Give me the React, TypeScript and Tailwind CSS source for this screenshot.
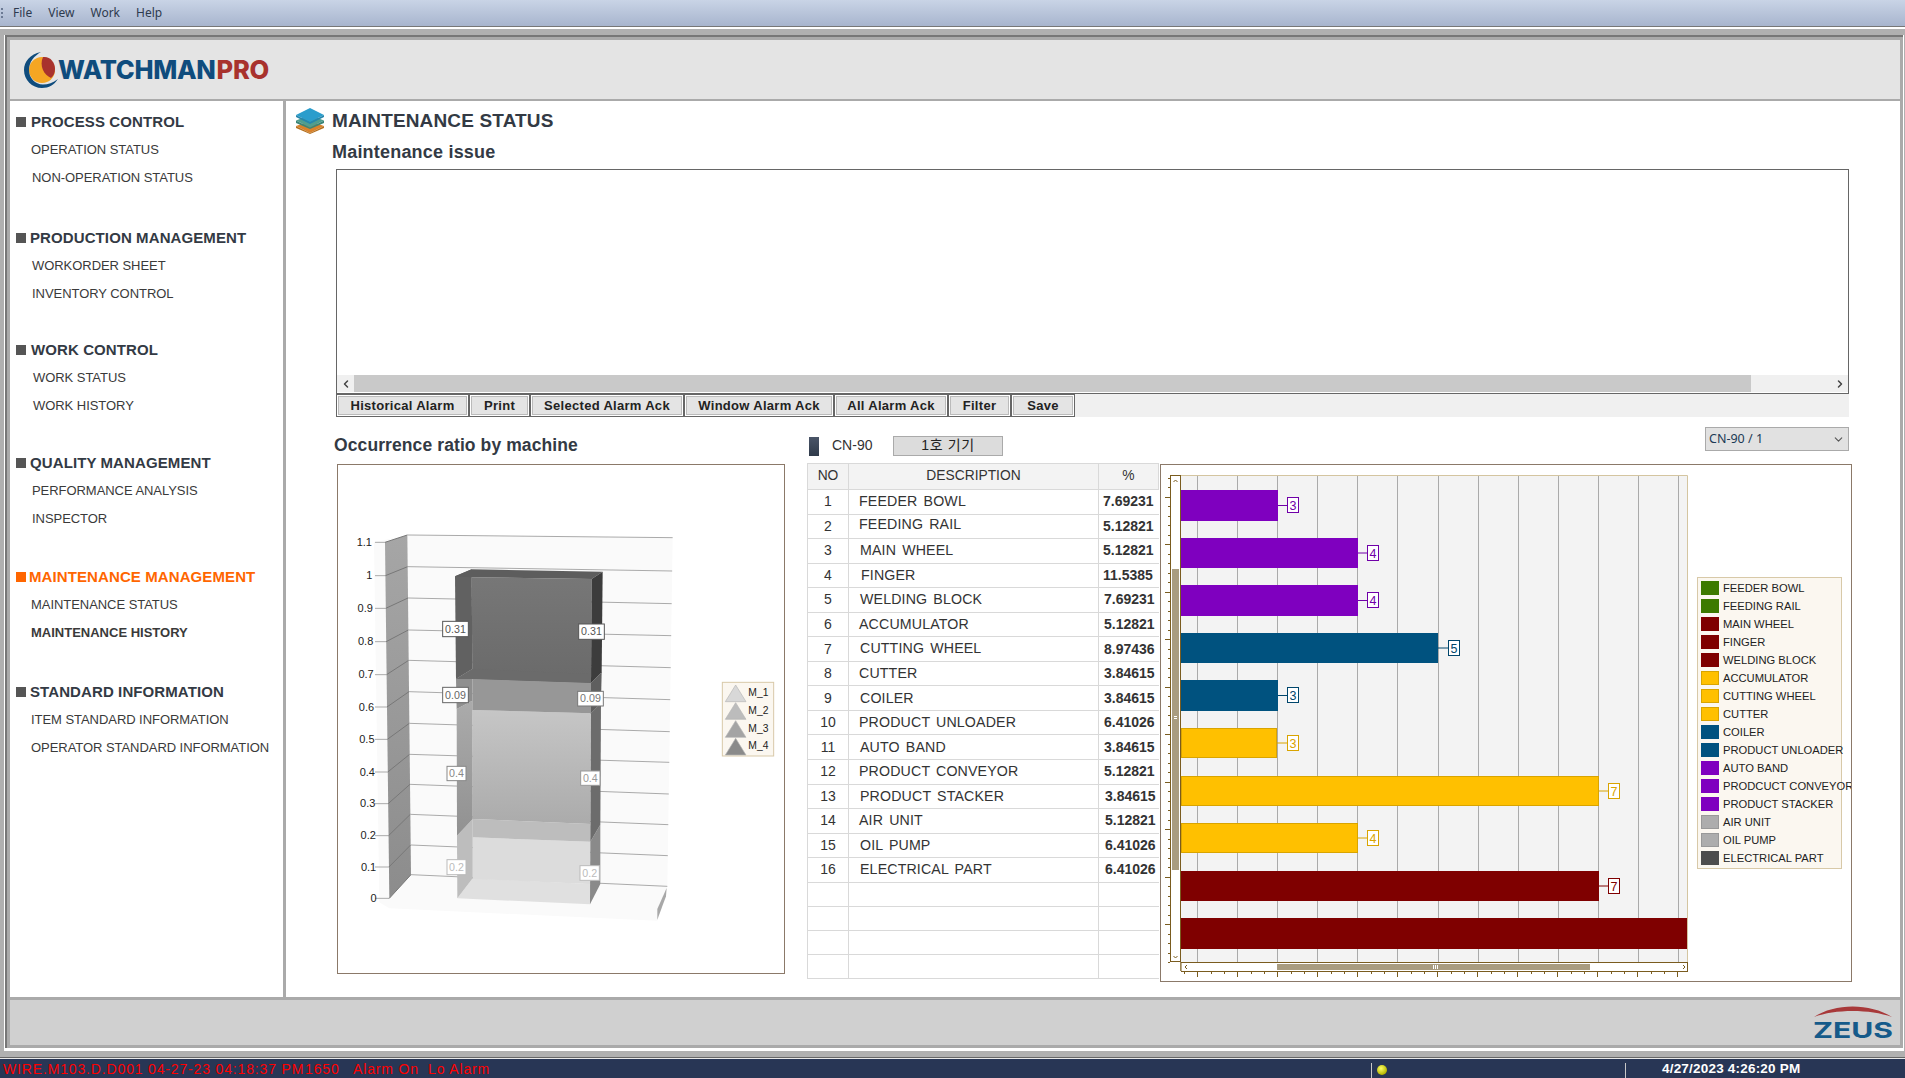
import React from "react";
import { ChevronLeft, ChevronRight, ChevronDown } from "lucide-react";

const groups = [
  { head: "PROCESS CONTROL", box: "mt-[10px]", ml: "ml-[5px]", color: "text-[#333a44]", sq: "bg-[#555]", items: [
    { t: "OPERATION STATUS", c: "pl-[21px]" }, { t: "NON-OPERATION STATUS", c: "pl-[22px]" } ] },
  { head: "PRODUCTION MANAGEMENT", box: "mt-[35px]", ml: "ml-[4px]", color: "text-[#333a44]", sq: "bg-[#555]", items: [
    { t: "WORKORDER SHEET", c: "pl-[22px]" }, { t: "INVENTORY CONTROL", c: "pl-[22px]" } ] },
  { head: "WORK CONTROL", box: "mt-[31px]", ml: "ml-[5px]", color: "text-[#333a44]", sq: "bg-[#555]", items: [
    { t: "WORK STATUS", c: "pl-[23px]" }, { t: "WORK HISTORY", c: "pl-[23px]" } ] },
  { head: "QUALITY MANAGEMENT", box: "mt-[32px]", ml: "ml-[4px]", color: "text-[#333a44]", sq: "bg-[#555]", items: [
    { t: "PERFORMANCE ANALYSIS", c: "pl-[22px]" }, { t: "INSPECTOR", c: "pl-[22px]" } ] },
  { head: "MAINTENANCE MANAGEMENT", box: "mt-[33px]", ml: "ml-[3px]", color: "text-[#ff6600]", sq: "bg-[#ff6600]", items: [
    { t: "MAINTENANCE STATUS", c: "pl-[21px]" }, { t: "MAINTENANCE HISTORY", c: "pl-[21px] font-bold text-[12.6px] tracking-normal" } ] },
  { head: "STANDARD INFORMATION", box: "mt-[34px]", ml: "ml-[4px]", color: "text-[#333a44]", sq: "bg-[#555]", items: [
    { t: "ITEM STANDARD INFORMATION", c: "pl-[21px]" }, { t: "OPERATOR STANDARD INFORMATION", c: "pl-[21px]" } ] },
];

const rows = [
  { n: 1, d: "FEEDER BOWL", p: "7.69231", dc: "pl-[10px]", pc: "pl-[4px]" },
  { n: 2, d: "FEEDING RAIL", p: "5.12821", dc: "pl-[10px] pb-[3px]", pc: "pl-[4px]" },
  { n: 3, d: "MAIN WHEEL", p: "5.12821", dc: "pl-[11px]", pc: "pl-[4px]" },
  { n: 4, d: "FINGER", p: "11.5385", dc: "pl-[12px]", pc: "pl-[4px]" },
  { n: 5, d: "WELDING BLOCK", p: "7.69231", dc: "pl-[11px]", pc: "pl-[5px]" },
  { n: 6, d: "ACCUMULATOR", p: "5.12821", dc: "pl-[10px]", pc: "pl-[5px]" },
  { n: 7, d: "CUTTING WHEEL", p: "8.97436", dc: "pl-[11px]", pc: "pl-[5px]" },
  { n: 8, d: "CUTTER", p: "3.84615", dc: "pl-[10px]", pc: "pl-[5px]" },
  { n: 9, d: "COILER", p: "3.84615", dc: "pl-[11px]", pc: "pl-[5px]" },
  { n: 10, d: "PRODUCT UNLOADER", p: "6.41026", dc: "pl-[10px]", pc: "pl-[5px]" },
  { n: 11, d: "AUTO BAND", p: "3.84615", dc: "pl-[11px]", pc: "pl-[5px]" },
  { n: 12, d: "PRODUCT CONVEYOR", p: "5.12821", dc: "pl-[10px]", pc: "pl-[5px]" },
  { n: 13, d: "PRODUCT STACKER", p: "3.84615", dc: "pl-[11px]", pc: "pl-[6px]" },
  { n: 14, d: "AIR UNIT", p: "5.12821", dc: "pl-[10px]", pc: "pl-[6px]" },
  { n: 15, d: "OIL PUMP", p: "6.41026", dc: "pl-[11px]", pc: "pl-[6px]" },
  { n: 16, d: "ELECTRICAL PART", p: "6.41026", dc: "pl-[11px]", pc: "pl-[6px]" },
];

const buttons = [
  { t: "Historical Alarm", w: "w-[133px]" },
  { t: "Print", w: "w-[61px]" },
  { t: "Selected Alarm Ack", w: "w-[154px]" },
  { t: "Window Alarm Ack", w: "w-[150px]" },
  { t: "All Alarm Ack", w: "w-[114px]" },
  { t: "Filter", w: "w-[63px]" },
  { t: "Save", w: "w-[64px]" },
];

function Logo() {
  return (
    <div className="flex items-center pl-[13px] h-full">
      <svg width="36" height="38" viewBox="22 51 36 38" className="shrink-0">
        <circle cx="41" cy="70" r="13" fill="#f5a623" />
        <path d="M42 57C49 56 54 62 54 69C54 73 52.500 76 50 78C43 75 38 66 42 57Z" fill="#a8322d" />
        <path d="M40 52C29 54 23 62 23 70C23 80 31 88 41 88C48 88 53 85 57 79C52 83 47 84.500 42 84.500C34 84.500 28 78 28 70C28 62 33 56 40 52Z" fill="#0f4c7d" />
      </svg>
      <div className="font-['Inter',sans-serif] font-extrabold text-[25.5px] leading-none tracking-[-0.3px] text-[#0f4c7d] ml-[-1px]">
        WATCHMAN<span className="text-[#a8322d] ml-[1px]">PRO</span>
      </div>
    </div>
  );
}

function Zeus() {
  return (
    <svg width="82" height="34" viewBox="1812 1006 82 34" className="shrink-0">
      <path d="M1814 1017C1835 1003 1870 1003 1892 1017C1870 1009 1835 1009 1814 1017Z" fill="#a8393a" />
      <text x="1813" y="1038" textLength="80" lengthAdjust="spacingAndGlyphs" className="font-['Inter',sans-serif] font-bold text-[22px]" fill="#155a8a">ZEUS</text>
    </svg>
  );
}

function StackIcon() {
  return (
    <svg width="30" height="26" viewBox="0 0 30 26" className="shrink-0">
      <path d="M15 13L29 18L15 25L1 18Z" fill="#d9822b" />
      <path d="M1 18L15 25L29 18L29 20L15 26L1 20Z" fill="#b5701f" />
      <path d="M15 7L29 12.500L15 19.500L1 12.500Z" fill="#4f9e8f" />
      <path d="M1 12.500L15 19.500L29 12.500L29 15L15 21L1 15Z" fill="#3a8577" />
      <path d="M15 0L29 7L15 14L1 7Z" fill="#2a9dcc" />
      <path d="M1 7L15 14L29 7L29 9L15 16L1 9Z" fill="#2586ad" />
    </svg>
  );
}

const tickY = [250, 350, 448, 548, 647, 744, 841, 939, 1034, 1130, 1224, 1318];
const backY = [228, 323, 417, 513, 604, 698, 793, 886, 976, 1066, 1158, 1247];
const rightY = [236, 336, 434, 530, 626, 722, 818, 910, 1005, 1097, 1190, 1282];
const tickLabel = ["1.1", "1", "0.9", "0.8", "0.7", "0.6", "0.5", "0.4", "0.3", "0.2", "0.1", "0"];
const valueLabels = [
  { x: 338, y: 487, w: 77, h: 46, t: "0.31", b: "#555", c: "#555" },
  { x: 746, y: 495, w: 77, h: 46, t: "0.31", b: "#555", c: "#555" },
  { x: 338, y: 685, w: 77, h: 46, t: "0.09", b: "#666", c: "#666" },
  { x: 743, y: 697, w: 77, h: 44, t: "0.09", b: "#777", c: "#777" },
  { x: 351, y: 922, w: 57, h: 43, t: "0.4", b: "#888", c: "#888" },
  { x: 752, y: 936, w: 58, h: 43, t: "0.4", b: "#999", c: "#999" },
  { x: 351, y: 1202, w: 57, h: 45, t: "0.2", b: "#bbb", c: "#bbb" },
  { x: 750, y: 1220, w: 58, h: 44, t: "0.2", b: "#bbb", c: "#bbb" },
];
const triLegend = [
  { t: "M_1", c: "#d8d8d8", y: 678 },
  { t: "M_2", c: "#bcbcbc", y: 731 },
  { t: "M_3", c: "#a4a4a4", y: 785 },
  { t: "M_4", c: "#8a8a8a", y: 838 },
];

function Chart3D() {
  return (
    <svg width="446" height="508" viewBox="338 466 446 508" className="block">
      <defs>
        <linearGradient id="wall" x1="0" y1="0" x2="0" y2="1">
          <stop offset="0" stopColor="#a6a6a6" />
          <stop offset="1" stopColor="#8c8c8c" />
        </linearGradient>
        <linearGradient id="f4" x1="0" y1="0" x2="0" y2="1">
          <stop offset="0" stopColor="#777" />
          <stop offset="1" stopColor="#6a6a6a" />
        </linearGradient>
        <linearGradient id="f2" x1="0" y1="0" x2="0" y2="1">
          <stop offset="0" stopColor="#c6c6c6" />
          <stop offset="1" stopColor="#ababab" />
        </linearGradient>
        <linearGradient id="l2" x1="0" y1="0" x2="0" y2="1">
          <stop offset="0" stopColor="#ababab" />
          <stop offset="1" stopColor="#919191" />
        </linearGradient>
      </defs>
      <g transform="translate(330 460) scale(0.33333)" className="font-['Liberation_Sans',sans-serif]">
        <polygon points="132,250 232,228 1028,236 1012,1280 982,1385 178,1348 148,1330" fill="#fafafa" />
        <polygon points="165,250 232,228 243,1247 178,1318" fill="url(#wall)" />
        {tickY.map((y, i) => {
          const wx = 165 + (i / 11) * 13;
          const bx = 232 + (i / 11) * 11;
          const rx = 1028 - (i / 11) * 16;
          return (
            <g key={i}>
              <line x1={135} y1={y} x2={wx} y2={y} stroke="#aaa" strokeWidth="3" />
              <line x1={wx} y1={y} x2={bx} y2={backY[i]} stroke="#777" strokeWidth="3" />
              <line x1={bx} y1={backY[i]} x2={rx} y2={rightY[i]} stroke="#aaa" strokeWidth="3" />
              <text x={126 + (i / 11) * 14} y={y + 11} textAnchor="end" fontSize="33" fill="#222">{tickLabel[i]}</text>
            </g>
          );
        })}
        <polygon points="982,1350 1010,1287 1008,1312 982,1382" fill="#a8a8a8" />

        {/* M_1 */}
        <polygon points="382,1318 428,1258 780,1275 780,1336" fill="#e0e0e0" />
        <polygon points="428,1135 781,1148 780,1275 428,1260" fill="#dcdcdc" />
        <polygon points="428,1080 781,1095 781,1148 428,1135" fill="#bdbdbd" />
        <polygon points="381,1130 428,1080 428,1258 382,1318" fill="#bdbdbd" />
        <polygon points="781,1148 811,1097 811,1275 780,1336" fill="#8a8a8a" />
        {/* M_2 */}
        <polygon points="427,753 783,763 781,1095 428,1080" fill="url(#f2)" />
        <polygon points="380,750 427,725 428,1080 381,1130" fill="url(#l2)" />
        <polygon points="783,763 813,733 811,1097 781,1148" fill="#6c6c6c" />
        {/* M_3 */}
        <polygon points="427,660 783,672 783,763 427,753" fill="#979797" />
        <polygon points="378,660 427,630 427,725 380,750" fill="#8f8f8f" />
        <polygon points="783,672 815,640 813,733 783,763" fill="#5f5f5f" />
        {/* M_4 */}
        <polygon points="425,355 785,360 783,672 427,660" fill="url(#f4)" />
        <polygon points="375,352 425,331 427,630 378,660" fill="#616161" />
        <polygon points="375,352 425,331 818,338 785,360 425,355" fill="#5d5d5d" />
        <polygon points="785,360 818,338 815,640 783,672" fill="#3c3c3c" />
        <polygon points="378,660 427,630 783,645 783,672 427,660" fill="#6b6b6b" />

        {valueLabels.map((v, i) => (
          <g key={i}>
            <rect x={v.x} y={v.y} width={v.w} height={v.h} fill="#fff" stroke={v.b} strokeWidth="3" />
            <text x={v.x + v.w / 2} y={v.y + v.h / 2 + 11} textAnchor="middle" fontSize="32" fill={v.c}>{v.t}</text>
          </g>
        ))}

        <rect x="1177" y="670" width="154" height="221" fill="#fbf7f0" stroke="#d8c9a8" strokeWidth="3" />
        {triLegend.map((l) => (
          <g key={l.t}>
            <polygon points={`1186,${l.y + 50} 1217,${l.y} 1248,${l.y + 50}`} fill={l.c} stroke="#b5b5b5" strokeWidth="2" />
            <text x="1255" y={l.y + 33} fontSize="31" fill="#222">{l.t}</text>
          </g>
        ))}
      </g>
    </svg>
  );
}

const gridX = [1197, 1237, 1277, 1317, 1357, 1397, 1438, 1478, 1518, 1558, 1598, 1638, 1678];
const bars = [
  { y: 491, h: 30, x2: 1278, f: "#7f00bf", s: "#7f00bf", l: "3", lx: 1287, c: "#7000a8" },
  { y: 539, h: 29, x2: 1358, f: "#7f00bf", s: "#7f00bf", l: "4", lx: 1367, c: "#7000a8" },
  { y: 586, h: 30, x2: 1358, f: "#7f00bf", s: "#7f00bf", l: "4", lx: 1367, c: "#7000a8" },
  { y: 634, h: 29, x2: 1438, f: "#00527f", s: "#00527f", l: "5", lx: 1448, c: "#00466c" },
  { y: 681, h: 30, x2: 1278, f: "#00527f", s: "#00527f", l: "3", lx: 1287, c: "#00466c" },
  { y: 729, h: 29, x2: 1277, f: "#ffc000", s: "#d9a400", l: "3", lx: 1287, c: "#d9a400" },
  { y: 777, h: 29, x2: 1599, f: "#ffc000", s: "#d9a400", l: "7", lx: 1608, c: "#d9a400" },
  { y: 824, h: 29, x2: 1358, f: "#ffc000", s: "#d9a400", l: "4", lx: 1367, c: "#d9a400" },
  { y: 872, h: 29, x2: 1599, f: "#7f0000", s: "#7f0000", l: "7", lx: 1608, c: "#7f0000" },
  { y: 919, h: 30, x2: 1687, f: "#7f0000", s: "#7f0000", l: "", lx: 0, c: "" },
];
const legend = [
  { t: "FEEDER BOWL", c: "#3d7a00", b: "#3d7a00" },
  { t: "FEEDING RAIL", c: "#3d7a00", b: "#3d7a00" },
  { t: "MAIN WHEEL", c: "#7f0000", b: "#7f0000" },
  { t: "FINGER", c: "#7f0000", b: "#7f0000" },
  { t: "WELDING BLOCK", c: "#7f0000", b: "#7f0000" },
  { t: "ACCUMULATOR", c: "#ffc000", b: "#d9a400" },
  { t: "CUTTING WHEEL", c: "#ffc000", b: "#d9a400" },
  { t: "CUTTER", c: "#ffc000", b: "#d9a400" },
  { t: "COILER", c: "#00527f", b: "#00527f" },
  { t: "PRODUCT UNLOADER", c: "#00527f", b: "#00527f" },
  { t: "AUTO BAND", c: "#7f00bf", b: "#7f00bf" },
  { t: "PRODCUCT CONVEYOR", c: "#7f00bf", b: "#7f00bf" },
  { t: "PRODUCT STACKER", c: "#7f00bf", b: "#7f00bf" },
  { t: "AIR UNIT", c: "#adadad", b: "#999" },
  { t: "OIL PUMP", c: "#adadad", b: "#999" },
  { t: "ELECTRICAL PART", c: "#4d4d4d", b: "#4d4d4d" },
];

function BarChart() {
  const brown = "#7a5c1f";
  const vTicks: number[] = [];
  for (let i = 0; i < 52; i++) vTicks.push(478.7 + i * 9.5);
  const hTicks: number[] = [];
  for (let i = 0; i < 38; i++) hTicks.push(1184 + i * 13.33);
  return (
    <svg width="690" height="516" viewBox="1161 466 690 516" className="block font-['Liberation_Sans',sans-serif]">
      <rect x="1181" y="476" width="506" height="487" fill="#f3f3f3" />
      {gridX.map((x) => (
        <line key={x} x1={x + 0.5} y1={476} x2={x + 0.5} y2={963} stroke="#aaa" />
      ))}
      <path d="M1181 476.500H1687.500V963" fill="none" stroke="#d4c5a0" />
      {bars.map((b, i) => (
        <g key={i}>
          <rect x="1181.500" y={b.y + 0.5} width={b.x2 - 1182} height={b.h} fill={b.f} stroke={b.s} />
          {b.l && (
            <g>
              <line x1={b.x2} y1={b.y + b.h / 2 + 0.5} x2={b.lx} y2={b.y + b.h / 2 + 0.5} stroke={b.c} />
              <rect x={b.lx + 0.5} y={b.y + 7.5} width="11" height="15" fill="#fff" stroke={b.c} />
              <text x={b.lx + 6} y={b.y + 20} textAnchor="middle" fontSize="12.500" fill={b.c}>{b.l}</text>
            </g>
          )}
        </g>
      ))}
      {/* vertical scrollbar */}
      <rect x="1170.500" y="476.500" width="10" height="486" fill="#fff" stroke={brown} />
      <rect x="1172" y="570" width="7" height="301" fill="#a99c80" />
      <path d="M1173.500 483L1175.500 481L1177.500 483" fill="none" stroke={brown} strokeWidth="1" />
      <path d="M1173.500 957L1175.500 959L1177.500 957" fill="none" stroke={brown} strokeWidth="1" />
      <path d="M1174 717.500H1177M1174 719.500H1177" stroke="#fff" />
      {vTicks.map((y, i) => (
        <line key={i} x1={(i + 3) % 5 === 0 ? 1165 : 1168} y1={Math.round(y) + 0.5} x2={1170} y2={Math.round(y) + 0.5} stroke={brown} />
      ))}
      {/* horizontal scrollbar */}
      <path d="M1181 963.500H1688M1181 972.500H1688M1181 963V972M1687.500 963V972" fill="none" stroke={brown} />
      <rect x="1181" y="964" width="506" height="8" fill="#fff" />
      <path d="M1181 963.500H1688M1181 972.500H1688M1181 963V972M1687.500 963V972" fill="none" stroke={brown} />
      <rect x="1277" y="965" width="313" height="6" fill="#a99c80" />
      <path d="M1433.500 966V970M1435.500 966V970M1437.500 966V970" stroke="#fff" />
      <path d="M1187 966L1185 968L1187 970" fill="none" stroke={brown} />
      <path d="M1683 966L1685 968L1683 970" fill="none" stroke={brown} />
      {hTicks.map((x, i) => (
        <line key={i} x1={Math.round(x) + 0.5} y1={973} x2={Math.round(x) + 0.5} y2={i % 3 === 1 ? 978 : 975} stroke={brown} />
      ))}
      {/* legend */}
      <rect x="1697.500" y="578.500" width="144" height="291" fill="#fbf7f0" stroke="#d8c9a8" />
      {legend.map((l, i) => (
        <g key={l.t}>
          <rect x="1701.500" y={582.5 + i * 18} width="17" height="13" fill={l.c} stroke={l.b} />
          <text x="1723" y={593 + i * 18} fontSize="11.200" fill="#222">{l.t}</text>
        </g>
      ))}
    </svg>
  );
}

export default function App() {
  return (
    <div className="w-[1905px] h-[1078px] flex flex-col overflow-hidden bg-[#b0b0b0] font-['Liberation_Sans','Noto_Sans_CJK_KR',sans-serif]">
      {/* menu bar */}
      <div className="h-[27px] shrink-0 flex items-center bg-gradient-to-b from-[#c9d4e6] to-[#a8b5ce] border-b border-[#777] font-['Noto_Sans',sans-serif] text-[12px] text-[#2e3a4e]">
        <div className="ml-[1px] w-[2px] flex flex-col gap-[2px]">
          <span className="block w-[2px] h-[2px] bg-[#6b7a94]" />
          <span className="block w-[2px] h-[2px] bg-[#6b7a94]" />
          <span className="block w-[2px] h-[2px] bg-[#6b7a94]" />
        </div>
        <span className="ml-[10px]">File</span>
        <span className="ml-[16px]">View</span>
        <span className="ml-[16px]">Work</span>
        <span className="ml-[16px]">Help</span>
      </div>

      {/* window frame */}
      <div className="h-[1030px] shrink-0 border-t-2 border-white bg-[#b0b0b0] pt-[6px] pb-[6px] pl-[4px] pr-[1px]">
        <div className="h-full border-l border-r border-b-[3px] border-white">
          <div className="h-full border-l-2 border-t-2 border-[#777] bg-[#aaaaaa] pl-[3px] pt-[3px] pr-[3px] pb-[3px] flex flex-col">
            {/* header */}
            <div className="h-[61px] shrink-0 bg-[#e4e4e4] border-b-2 border-[#aaaaaa]">
              <Logo />
            </div>

            {/* middle */}
            <div className="h-[899px] shrink-0 flex bg-white border-b-[3px] border-[#aaaaaa]">
              {/* sidebar */}
              <div className="w-[276px] shrink-0 border-r-[3px] border-[#aaaaaa]">
                {groups.map((g) => (
                  <div key={g.head} className={g.box}>
                    <div className="h-[22px] flex items-center pl-[6px]">
                      <span className={`block w-[10px] h-[10px] shrink-0 ${g.sq}`} />
                      <span className={`${g.ml} font-bold text-[15px] tracking-[0.1px] whitespace-nowrap ${g.color}`}>{g.head}</span>
                    </div>
                    <div className="mt-[3px]">
                      {g.items.map((it) => (
                        <div key={it.t} className={`h-[28px] flex items-center text-[13px] tracking-[-0.05px] text-[#3a3a3a] whitespace-nowrap ${it.c}`}>
                          {it.t}
                        </div>
                      ))}
                    </div>
                  </div>
                ))}
              </div>

              {/* main */}
              <div className="flex-1 min-w-0 pt-[7px]">
                <div className="flex items-center h-[26px] pl-[9px]">
                  <StackIcon />
                  <span className="ml-[7px] font-bold text-[19px] tracking-[0.15px] text-[#333a44] whitespace-nowrap">MAINTENANCE STATUS</span>
                </div>
                <div className="h-[24px] mt-[6px] ml-[46px] flex items-center font-bold text-[18px] tracking-[0.2px] text-[#333a44]">Maintenance issue</div>

                {/* alarm box */}
                <div className="ml-[50px] mt-[5px] w-[1513px] h-[225px] border border-[#666] bg-white flex flex-col justify-end">
                  <div className="h-[17px] mb-[1px] flex items-center bg-[#f0f0f0]">
                    <div className="w-[17px] flex justify-center"><ChevronLeft size={12} strokeWidth={3} className="text-[#444]" /></div>
                    <div className="w-[1397px] h-full bg-[#c9c9c9]" />
                    <div className="flex-1 flex justify-end pr-[2px]"><ChevronRight size={12} strokeWidth={3} className="text-[#444]" /></div>
                  </div>
                </div>
                <div className="ml-[50px] w-[1513px] h-[23px] flex bg-[#f0f0f0]">
                  {buttons.map((b) => (
                    <div key={b.t} className={`${b.w} h-full shrink-0 border border-[#666] bg-white p-[1px]`}>
                      <div className="h-full bg-[#e4e4e4] border border-[#bbb] flex items-center justify-center font-bold text-[13px] tracking-[0.3px] text-[#222] whitespace-nowrap">
                        {b.t}
                      </div>
                    </div>
                  ))}
                </div>

                {/* section heading row */}
                <div className="h-[36px] mt-[10px] flex items-center pl-[48px]">
                  <div className="w-[475px] font-bold text-[17.5px] text-[#333a44] tracking-[0.1px] mt-[1px] whitespace-nowrap">Occurrence ratio by machine</div>
                  <span className="block w-[10px] h-[19px] mt-[2px] bg-gradient-to-b from-[#4a5568] to-[#2f3a4a]" />
                  <span className="ml-[13px] text-[14px] text-[#333] w-[48px] mt-[1px]">CN-90</span>
                  <div className="ml-[13px] w-[110px] h-[20px] mt-[1px] bg-[#dcdcdc] border border-[#aaa] flex items-center justify-center text-[14px] tracking-[0.6px] text-[#222]">1호 기기</div>
                  <div className="ml-auto mr-[51px] mb-[12px] w-[144px] h-[24px] bg-[#e1e1e1] border border-[#aaa] flex items-center justify-between px-[3px] font-['Noto_Sans',sans-serif] text-[12.5px] text-[#1c3a55]">
                    <span>CN-90 / 1</span>
                    <ChevronDown size={13} className="text-[#555]" />
                  </div>
                </div>

                {/* lower row */}
                <div className="flex items-start pl-[51px]">
                  <div className="mt-[1px] w-[448px] h-[510px] border border-[#8b7969] bg-white">
                    <Chart3D />
                  </div>
                  <div className="ml-[22px] w-[352px] border-l border-t border-[#d9d9d9] text-[#333]">
                    <div className="h-[26px] flex bg-[#f3f3f3] border-b border-r border-[#d9d9d9] text-[13.8px]">
                      <div className="w-[41px] flex items-center justify-center border-r border-[#d9d9d9]">NO</div>
                      <div className="w-[250px] flex items-center justify-center border-r border-[#d9d9d9]">DESCRIPTION</div>
                      <div className="flex-1 flex items-center justify-center">%</div>
                    </div>
                    {rows.map((r) => (
                      <div key={r.n} className="h-[24.56px] flex border-b border-[#d9d9d9]">
                        <div className="w-[41px] flex items-center justify-center border-r border-[#d9d9d9] text-[14px]">{r.n}</div>
                        <div className={`w-[250px] flex items-center border-r border-[#d9d9d9] text-[14.2px] tracking-[0.15px] [word-spacing:2px] whitespace-nowrap ${r.dc}`}>{r.d}</div>
                        <div className={`flex-1 flex items-center font-bold text-[14px] ${r.pc}`}>{r.p}</div>
                      </div>
                    ))}
                    {[0, 1, 2, 3].map((i) => (
                      <div key={i} className="h-[24px] flex border-b border-[#d9d9d9]">
                        <div className="w-[41px] border-r border-[#d9d9d9]" />
                        <div className="w-[250px] border-r border-[#d9d9d9]" />
                        <div className="flex-1" />
                      </div>
                    ))}
                  </div>
                  <div className="mt-[1px] ml-[1px] w-[692px] h-[518px] border border-[#8b7969] bg-white">
                    <BarChart />
                  </div>
                </div>
              </div>
            </div>

            {/* footer */}
            <div className="flex-1 bg-[#d0d0d0] flex items-start justify-end pr-[6px] pt-[6px]">
              <Zeus />
            </div>
          </div>
        </div>
      </div>

      {/* status bar */}
      <div className="h-[1px] shrink-0 bg-[#666]" />
      <div className="h-[1px] shrink-0 bg-[#e8e8e8]" />
      <div className="flex-1 flex items-center bg-[#283655] text-[14px] tracking-[0.85px] text-[#ff0000] whitespace-nowrap">
        <span className="ml-[3px] w-[145px]">WIRE.M103.D.D001</span>
        <span className="w-[157px]">04-27-23 04:18:37 PM</span>
        <span className="w-[48px]">1650</span>
        <span className="w-[75px]">Alarm On</span>
        <span className="w-[100px]">Lo Alarm</span>
        <div className="ml-[843px] w-[1px] h-[17px] self-end bg-[#c8c8c8]" />
        <span className="ml-[5px] block w-[10px] h-[10px] rounded-full bg-[radial-gradient(circle_at_40%_35%,#ffff66,#b5b500_70%,#555500)]" />
        <div className="ml-[238px] w-[1px] h-[17px] self-end bg-[#c8c8c8]" />
        <span className="ml-[36px] font-bold text-[13.5px] tracking-[0.2px] text-white">4/27/2023 4:26:20 PM</span>
      </div>
    </div>
  );
}
